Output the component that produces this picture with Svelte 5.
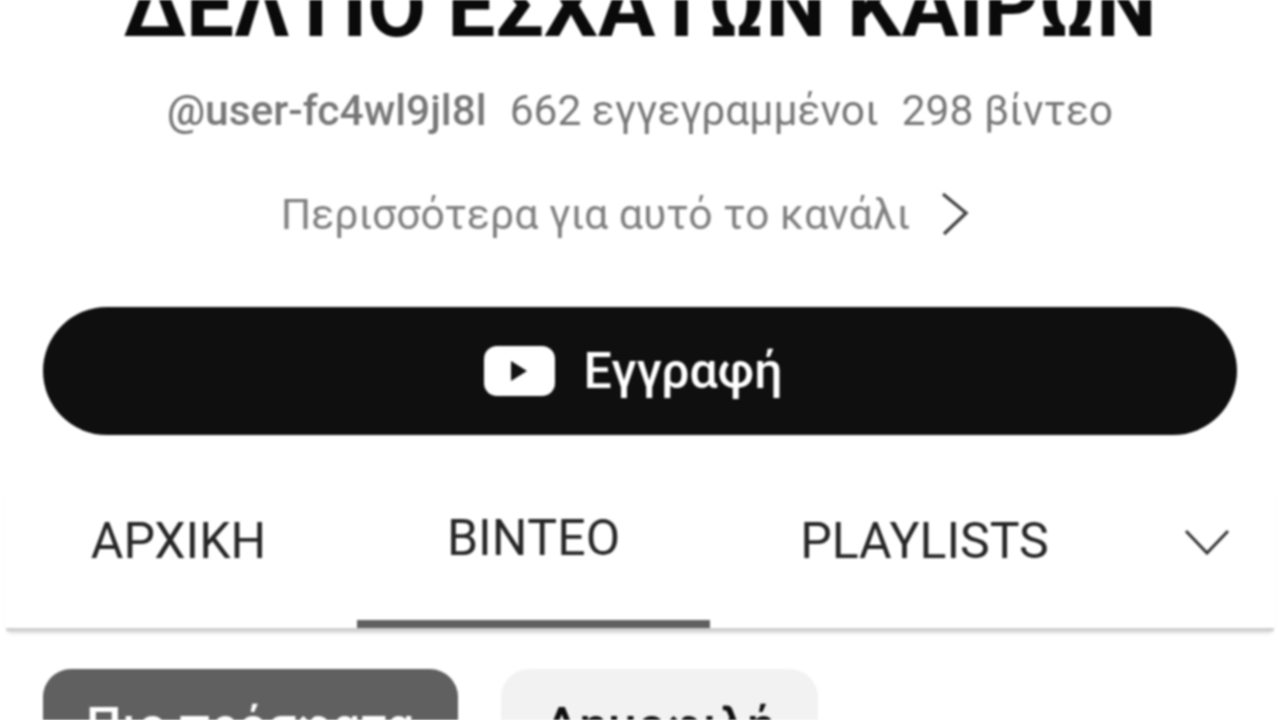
<script>
	const tabs = [
		{ label: 'ΑΡΧΙΚΗ', active: false },
		{ label: 'ΒΙΝΤΕΟ', active: true },
		{ label: 'PLAYLISTS', active: false }
	];
	const chips = [
		{ label: 'Πιο πρόσφατα', active: true },
		{ label: 'Δημοφιλή', active: false }
	];
</script>

<main>
	<header class="channel">
		<h1>ΔΕΛΤΙΟ ΕΣΧΑΤΩΝ ΚΑΙΡΩΝ</h1>
		<p class="meta">
			<span class="handle">@user-fc4wl9jl8l</span>
			<span>662 εγγεγραμμένοι</span>
			<span>298 βίντεο</span>
		</p>
		<p class="more">
			<span>Περισσότερα για αυτό το κανάλι</span>
			<svg width="28" height="44" viewBox="0 0 28 44"><path d="M2 2 L25 21 L3 42" fill="none" stroke="#444" stroke-width="3.4" /></svg>
		</p>
		<button class="subscribe">
			<svg width="71" height="50" viewBox="0 0 71 50">
				<rect width="71" height="50" rx="13" fill="#fff" />
				<path d="M27 15 L43 25 L27 35 Z" fill="#111" />
			</svg>
			<span>Εγγραφή</span>
		</button>
	</header>

	<nav class="tabs">
		{#each tabs as tab}
			<div class="tab" class:active={tab.active}>{tab.label}</div>
		{/each}
		<div class="expand">
			<svg width="46" height="26" viewBox="0 0 46 26"><path d="M2 2 L23 24 L44 2" fill="none" stroke="#333" stroke-width="3" /></svg>
		</div>
	</nav>

	<div class="chips">
		{#each chips as chip}
			<div class="chip" class:active={chip.active}>{chip.label}</div>
		{/each}
	</div>
</main>

<style>
	:global(body) {
		margin: 0;
		background: #fff;
		overflow: hidden;
	}

	main {
		width: 1280px;
		height: 720px;
		overflow: hidden;
		font-family: Roboto, "Noto Sans", sans-serif;
		filter: blur(0.8px);
	}

	.channel {
		display: flex;
		flex-direction: column;
		align-items: center;
		padding: 0 43px;
	}

	h1 {
		margin: -42px 0 0;
		font-size: 85.4px;
		line-height: 98px;
		font-weight: 700;
		color: #0a0a0a;
		white-space: nowrap;
	}

	.meta {
		display: flex;
		gap: 23px;
		margin: 30px 0 0;
		font-size: 42.5px;
		line-height: 50px;
		color: #777;
		white-space: nowrap;
	}

	.handle {
		font-weight: 500;
	}

	.more {
		display: flex;
		align-items: center;
		gap: 31px;
		margin: 48px 30px 0 0;
		font-size: 42.8px;
		line-height: 60px;
		color: #808080;
		white-space: nowrap;
	}

	.subscribe {
		display: flex;
		align-items: center;
		justify-content: center;
		gap: 29px;
		width: 100%;
		height: 128px;
		margin-top: 63px;
		padding: 0 14px 0 0;
		border: 0;
		border-radius: 64px;
		background: #0f0f0f;
		color: #fff;
		font-family: inherit;
		font-size: 50px;
		font-weight: 500;
	}

	.tabs {
		display: flex;
		margin: 51px 6px 0;
		height: 142px;
		border-bottom: 3px solid #cfcfcf;
		box-shadow: 0 4px 3px -2px #d8d8d8;
		font-size: 50px;
		line-height: 57px;
		color: #262626;
	}

	.tab {
		box-sizing: border-box;
		display: flex;
		align-items: flex-start;
		justify-content: center;
		padding-top: 27px;
		white-space: nowrap;
	}

	.tab:nth-child(1) {
		width: 351px;
		padding-right: 6px;
	}

	.tab:nth-child(2) {
		width: 353px;
		padding-top: 24px;
		height: 142px;
		border-bottom: 8px solid #606060;
	}

	.tab:nth-child(3) {
		width: 429px;
	}

	.expand {
		flex: 1;
		display: flex;
		justify-content: center;
		padding-top: 43px;
	}

	.chips {
		display: flex;
		gap: 43px;
		margin: 38px 43px 0;
	}

	.chip {
		padding: 28px 43px;
		border-radius: 28px;
		background: #f2f2f2;
		font-size: 50.2px;
		line-height: 58px;
		color: #0f0f0f;
		font-weight: 500;
		white-space: nowrap;
	}

	.chip.active {
		background: #606060;
		color: #fff;
	}
</style>
